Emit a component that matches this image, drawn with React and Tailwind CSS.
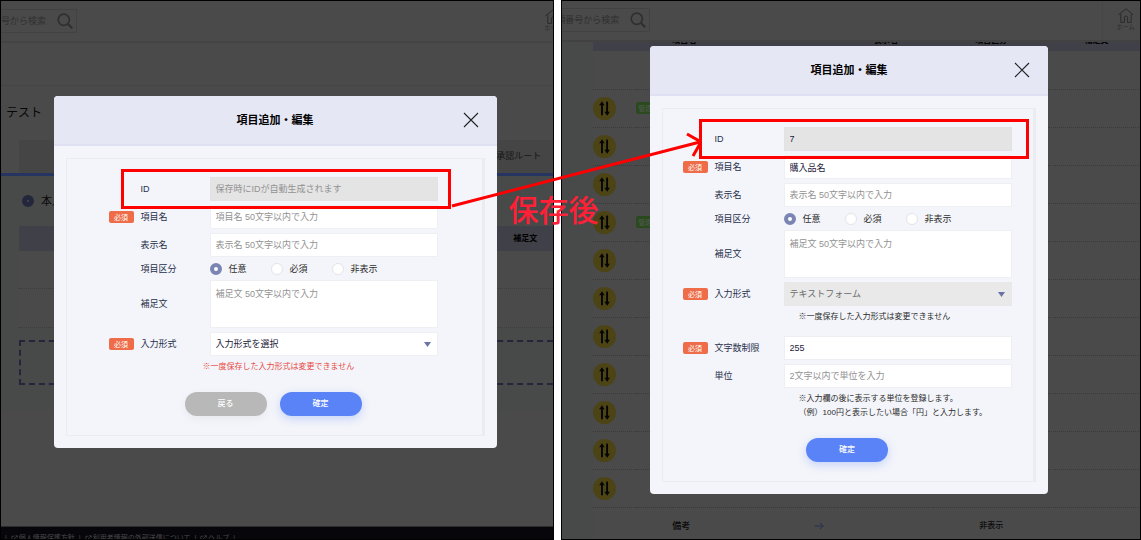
import React from "react";

const FONT = "font-['Liberation_Sans','Noto_Sans_CJK_JP',sans-serif]";

function SearchBar({ text, className }) {
  return (
    <form className={"flex h-6 items-center justify-end overflow-hidden border border-l-0 border-[#424242] pr-[3px] " + className}>
      <span className="shrink-0 whitespace-nowrap text-[9px] leading-3 text-[#303030]">{text}</span>
      <button type="button" aria-label="検索" className="ml-[11px] shrink-0 text-[#2f2f2f]">
        <svg viewBox="0 0 16 16" className="block size-4" fill="none" stroke="currentColor" strokeWidth="1.7">
          <circle cx="6.8" cy="6.8" r="5.6" />
          <path d="M11 11l4.2 4.2" strokeWidth="2.2" />
        </svg>
      </button>
    </form>
  );
}

function HomeLink() {
  return (
    <a href="#home" className="flex w-4 shrink-0 flex-col items-center text-[#2a2a2a]">
      <svg viewBox="0 0 16 15" className="h-[15px] w-4" fill="none" stroke="currentColor" strokeWidth="1">
        <path d="M.6 6.8 8 .8l7.4 6" />
        <path d="M2.8 6v8.4h3.6V9.6a1.6 1.6 0 0 1 3.2 0v4.8h3.6V6" />
      </svg>
      <span className="whitespace-nowrap text-[6px] leading-[8px]">ホーム</span>
    </a>
  );
}

function SortIcon() {
  return (
    <svg viewBox="0 0 22 22" className="block size-[23px]">
      <circle cx="11" cy="11" r="11" fill="#4d4416" />
      <g fill="none" stroke="#050505" strokeWidth="1.8">
        <path d="M8.6 17.4V6" />
        <path d="M13.5 4.4v11.6" />
      </g>
      <path d="M5.9 7.8 8.6 4l2.5 3.8z" fill="#050505" />
      <path d="M10.9 14.2l2.6 3.8 2.6-3.8z" fill="#050505" />
    </svg>
  );
}

function ExternalIcon() {
  return (
    <svg viewBox="0 0 8 8" className="size-[7px]" fill="none" stroke="currentColor" strokeWidth="0.8">
      <path d="M4 1.4H1v5.6h5.4V4.4" />
      <path d="M3.4 4.6 7 1M5 .8h2.2V3" />
    </svg>
  );
}

function FooterLink({ children }) {
  return (
    <a href="#footer" className="flex items-center gap-px">
      <ExternalIcon />
      {children}
    </a>
  );
}

function ApprovalPage() {
  return (
    <div className="absolute inset-0 flex flex-col overflow-hidden bg-[#4a4a4a]">
      <header className="flex h-[42px] shrink-0 justify-between border-b-2 border-[#444444]">
        <SearchBar text="番号から検索" className="mt-2 w-[76px]" />
        <div className="-mr-2 mt-2">
          <HomeLink />
        </div>
      </header>
      <div className="h-[43px] shrink-0 border-b border-[#454545]" />
      <h1 className="flex h-[54px] shrink-0 items-center pl-[5px] text-[12px] text-[#070707]">テスト</h1>
      <nav className="border-b-[3px] border-[#263461] pl-[18px]">
        <div className="flex h-[33px] items-center justify-end rounded-tl bg-[#454545] pr-3">
          <a href="#route" className="text-[9px] text-[#161616]">承認ルート</a>
        </div>
      </nav>
      <main className="flex h-[234px] shrink-0 flex-col bg-[#474a49] pl-[18px]">
        <label className="flex h-[50px] items-center gap-[7px] pl-[3px] text-[11px] text-[#0b0b0b]">
          <input type="radio" defaultChecked className="size-3 appearance-none rounded-full border-[5px] border-[#24273b] bg-[#4a4a4a]" />
          本人
        </label>
        <div className="flex h-[25px] items-center justify-end bg-[#404148] pr-4 text-[8px] font-bold text-black">補足文</div>
        <div className="h-[38px] border-b border-dotted border-[#3c3c3c] bg-[#4a4a4a]" />
        <div className="h-[39px] border-b border-dotted border-[#3c3c3c] bg-[#4a4a4a]" />
        <div className="mt-3 h-[45px] border-2 border-r-0 border-dashed border-[#24253a]" />
      </main>
      <div className="flex-1" />
      <footer className="flex h-[13px] shrink-0 items-start gap-[4px] overflow-hidden border-t border-[#2c2c2c] bg-[#06060b] pl-1 pt-[6px] text-[7px] leading-[10px] text-[#4a4a4a]">
        <span>|</span>
        <FooterLink>個人情報保護方針</FooterLink>
        <span>|</span>
        <FooterLink>利用者情報の外部送信について</FooterLink>
        <span>|</span>
        <FooterLink>ヘルプ</FooterLink>
        <span>|</span>
      </footer>
    </div>
  );
}

const MANAGED_ROWS = [true, false, false, true, false, false, false, false, false, false, false];

function ItemListPage() {
  return (
    <div className="absolute inset-0 flex flex-col overflow-hidden bg-[#4a4a4a]">
      <header className="relative z-10 flex h-[41px] shrink-0 justify-between border-b-2 border-[#424242] bg-[#4a4a4a]">
        <SearchBar text="項番号から検索" className="mt-[7px] w-[88px]" />
        <div className="flex w-[38px] justify-center border-l border-[#464646] pl-2 pt-[7px]">
          <HomeLink />
        </div>
      </header>
      <main className="flex-1 bg-[#474a49] pl-[31px]">
        <table className="-mt-4 w-full table-fixed border-collapse bg-[#4a4a4a] text-[8px] font-medium text-[#0a0a0a]">
          <colgroup>
            <col className="w-[43px]" />
            <col className="w-9" />
            <col className="w-[128px]" />
            <col className="w-[38px]" />
            <col className="w-[95px]" />
            <col className="w-[116px]" />
            <col />
          </colgroup>
          <thead>
            <tr className="h-[25px] bg-[#404148] leading-3 text-black">
              <th />
              <th />
              <th className="p-0 pt-1 text-left">項目名</th>
              <th />
              <th className="p-0 pt-1">表示名</th>
              <th className="p-0 pt-1">項目区分</th>
              <th className="p-0 pl-1 pt-1">補足文</th>
            </tr>
          </thead>
          <tbody>
            <tr className="h-[38px] border-b border-dotted border-[#3a3a3a]">
              <td colSpan={7} />
            </tr>
            {MANAGED_ROWS.map((managed, i) => (
              <tr key={i} className="h-[38px] border-b border-dotted border-[#3a3a3a]">
                <td className="p-0"><SortIcon /></td>
                <td className="p-0">
                  {managed && (
                    <span className="flex h-3 w-[25px] items-center justify-center rounded-xs bg-[#2a4a1d] text-[7px] leading-none text-[#50594d]">管理用</span>
                  )}
                </td>
                <td colSpan={5} />
              </tr>
            ))}
            <tr className="h-[38px]">
              <td />
              <td />
              <td className="p-0 text-[9px]">備考</td>
              <td className="p-0">
                <svg viewBox="0 0 10 8" className="mx-auto h-2 w-2.5" fill="none" stroke="#263052" strokeWidth="1">
                  <path d="M.5 4h8.6M6 1l3.2 3L6 7" />
                </svg>
              </td>
              <td />
              <td className="p-0 text-center">非表示</td>
              <td />
            </tr>
          </tbody>
        </table>
      </main>
    </div>
  );
}

function Row({ id, label, required, className = "", children, overlay }) {
  return (
    <div className={"relative grid grid-cols-[32px_69px_minmax(0,1fr)] items-center " + className}>
      {required ? (
        <span className="flex h-3 w-[25px] items-center justify-center rounded-xs bg-[#ee6c47] text-[7px] leading-none text-white">必須</span>
      ) : (
        <span />
      )}
      <label htmlFor={id} className="whitespace-nowrap text-[9px] leading-3 text-[#28304a]">{label}</label>
      {children}
      {overlay}
    </div>
  );
}

const FIELD = "w-full rounded-none border px-[5px] text-[9px] leading-3 text-[#1c2238] placeholder:text-[#929292] placeholder:opacity-100 outline-none ";
const WHITE_FIELD = "border-[#eeeff2] bg-white ";
const GREY_FIELD = "border-[#e2e2e2] bg-[#e4e4e4] ";

function TextField({ locked, ...props }) {
  return <input type="text" className={FIELD + (locked ? GREY_FIELD : WHITE_FIELD) + "h-6"} {...props} />;
}

function NoteField({ id }) {
  return <textarea id={id} placeholder="補足文 50文字以内で入力" className={FIELD + WHITE_FIELD + "block h-12 resize-none pt-[7px]"} />;
}

function SelectField({ id, value, disabled, className }) {
  return (
    <div className="relative">
      <select
        id={id}
        disabled={disabled}
        className={"block h-6 w-full appearance-none rounded-none border px-[5px] text-[9px] leading-3 opacity-100 " + className}
      >
        <option>{value}</option>
      </select>
      <svg viewBox="0 0 7 5" className="pointer-events-none absolute inset-y-0 right-[7px] my-auto h-[5px] w-[7px]" fill="#6a73a5">
        <path d="M0 0h7L3.5 5z" />
      </svg>
    </div>
  );
}

function KindRadios({ name }) {
  return (
    <div className="flex h-[15px] items-center" role="radiogroup" aria-label="項目区分">
      {["任意", "必須", "非表示"].map((kind, i) => (
        <label key={kind} className="flex w-[61px] items-center gap-[7px] whitespace-nowrap text-[9px] leading-3 text-[#2e2e2e]">
          <input
            type="radio"
            name={name}
            defaultChecked={i === 0}
            className="size-3 shrink-0 appearance-none rounded-full border border-[#e3e4e8] bg-white checked:border-4 checked:border-[#7b85b3]"
          />
          {kind}
        </label>
      ))}
    </div>
  );
}

function RoundButton({ className, children }) {
  return (
    <button type="button" className={"h-6 w-[82px] rounded-full text-[8px] font-medium leading-3 text-white " + className}>
      {children}
    </button>
  );
}

const BLUE_BUTTON = "bg-[#5983f7] shadow-[0_3px_10px_rgba(89,131,247,0.3)]";

function Modal({ className, children }) {
  return (
    <section role="dialog" aria-label="項目追加・編集" className={"relative max-w-full rounded bg-[#f4f5fa] " + className}>
      <header className="relative flex h-[50px] items-center justify-center rounded-t border-b-2 border-[#dfe0f2] bg-[#e5e7f5]">
        <h2 className="text-[11px] font-bold leading-4 text-black">項目追加・編集</h2>
        <button type="button" aria-label="閉じる" className="absolute right-[18px] top-4 text-[#222222]">
          <svg viewBox="0 0 16 16" className="block size-4" fill="none" stroke="currentColor" strokeWidth="1.1">
            <path d="M1 1l14 14M15 1 1 15" />
          </svg>
        </button>
      </header>
      <div className="p-3">
        <form className="border border-r-[3px] border-[#ebecef] pb-[19px] pr-0.5 pt-[18px]">
          <div className="mx-auto flex w-full max-w-[329px] flex-col gap-1">{children}</div>
        </form>
      </div>
    </section>
  );
}

function Highlight({ className, children }) {
  return <div className={"pointer-events-none absolute -bottom-2 -top-2 z-20 border-[3px] border-[#fe0000] " + className}>{children}</div>;
}

function SavedArrow() {
  return (
    <>
      <svg width="252" height="84" viewBox="0 0 252 84" className="absolute right-full top-[5px]" fill="none" stroke="#fe0000" strokeWidth="3">
        <path d="M2 79 250 15" />
        <path d="M237 7l14 8-8 14" />
      </svg>
      <p className="absolute right-full top-[67px] mr-[103px] whitespace-nowrap text-[30px] font-medium leading-[44px] text-[#ff2038]">保存後</p>
    </>
  );
}

export default function App() {
  return (
    <div className={"flex min-h-screen gap-[7px] overflow-hidden bg-white " + FONT} lang="ja">
      <div className="relative flex min-w-0 flex-[554] items-center justify-center border border-black pr-1 pt-1">
        <ApprovalPage />
        <Modal className="w-[443px]">
          <Row id="new-id" label="ID" overlay={<Highlight className="-right-[13px] left-3" />}>
            <TextField id="new-id" locked disabled placeholder="保存時にIDが自動生成されます" />
          </Row>
          <Row id="new-name" label="項目名" required>
            <TextField id="new-name" placeholder="項目名 50文字以内で入力" />
          </Row>
          <Row id="new-display" label="表示名">
            <TextField id="new-display" placeholder="表示名 50文字以内で入力" />
          </Row>
          <Row label="項目区分">
            <KindRadios name="new-kind" />
          </Row>
          <Row id="new-note" label="補足文">
            <NoteField id="new-note" />
          </Row>
          <Row id="new-format" label="入力形式" required>
            <SelectField id="new-format" value="入力形式を選択" className="border-[#eeeff2] bg-white text-[#1c2238]" />
          </Row>
          <p className="whitespace-nowrap pl-[94px] text-[8px] leading-[14px] text-[#e8483f]">※一度保存した入力形式は変更できません</p>
          <div className="mt-3.5 flex justify-center gap-[13px]">
            <RoundButton className="bg-[#b8b8b8] shadow-[0_3px_10px_rgba(0,0,0,0.05)]">戻る</RoundButton>
            <RoundButton className={BLUE_BUTTON}>確定</RoundButton>
          </div>
        </Modal>
      </div>

      <div className="relative flex min-w-0 flex-[580] items-center justify-center border border-black pr-1">
        <ItemListPage />
        <Modal className="w-[398px]">
          <Row
            id="saved-id"
            label="ID"
            overlay={
              <Highlight className="-right-[17px] left-4">
                <SavedArrow />
              </Highlight>
            }
          >
            <TextField id="saved-id" locked readOnly defaultValue="7" />
          </Row>
          <Row id="saved-name" label="項目名" required>
            <TextField id="saved-name" defaultValue="購入品名" />
          </Row>
          <Row id="saved-display" label="表示名">
            <TextField id="saved-display" placeholder="表示名 50文字以内で入力" />
          </Row>
          <Row label="項目区分">
            <KindRadios name="saved-kind" />
          </Row>
          <Row id="saved-note" label="補足文">
            <NoteField id="saved-note" />
          </Row>
          <Row id="saved-format" label="入力形式" required>
            <SelectField id="saved-format" value="テキストフォーム" disabled className="border-[#e8e8e8] bg-[#e9e9e9] text-[#6a6a6a]" />
          </Row>
          <p className="whitespace-nowrap pl-[116px] text-[8px] leading-[14px] text-[#2b2b2b]">※一度保存した入力形式は変更できません</p>
          <Row id="saved-limit" label="文字数制限" required className="mt-2">
            <TextField id="saved-limit" defaultValue="255" />
          </Row>
          <Row id="saved-unit" label="単位">
            <TextField id="saved-unit" placeholder="2文字以内で単位を入力" />
          </Row>
          <p className="whitespace-nowrap pl-[116px] text-[8px] leading-[14px] text-[#2b2b2b]">
            ※入力欄の後に表示する単位を登録します。
            <br />
            （例）100円と表示したい場合「円」と入力します。
          </p>
          <div className="mt-3.5 flex justify-center">
            <RoundButton className={BLUE_BUTTON}>確定</RoundButton>
          </div>
        </Modal>
      </div>
    </div>
  );
}
